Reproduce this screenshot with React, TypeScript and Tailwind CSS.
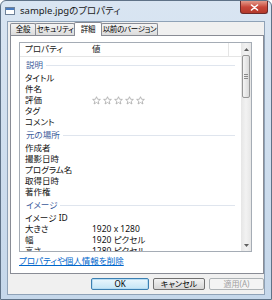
import React from 'react';

const jp = "font-['Noto_Sans','Noto_Sans_CJK_JP',sans-serif] [font-feature-settings:'palt']";

type Row = { name: string; value?: string; stars?: boolean };
type Group = { title: string; rows: Row[] };

const groups: Group[] = [
  {
    title: '説明',
    rows: [{ name: 'タイトル' }, { name: '件名' }, { name: '評価', stars: true }, { name: 'タグ' }, { name: 'コメント' }],
  },
  {
    title: '元の場所',
    rows: [{ name: '作成者' }, { name: '撮影日時' }, { name: 'プログラム名' }, { name: '取得日時' }, { name: '著作権' }],
  },
  {
    title: 'イメージ',
    rows: [
      { name: 'イメージ ID' },
      { name: '大きさ', value: '1920 x 1280' },
      { name: '幅', value: '1920 ピクセル' },
      { name: '高さ', value: '1280 ピクセル' },
    ],
  },
];

const Star = () => (
  <svg width="9" height="9" viewBox="0 0 10 10">
    <path
      d="M5 0.8 L6.2 3.6 L9.3 3.8 L6.9 5.8 L7.7 8.9 L5 7.2 L2.3 8.9 L3.1 5.8 L0.7 3.8 L3.8 3.6 Z"
      fill="#ffffff"
      stroke="#a9a9a9"
      strokeWidth="0.9"
      strokeLinejoin="round"
    />
  </svg>
);

const Tab = ({ label, width, active }: { label: string; width: string; active?: boolean }) =>
  active ? (
    <div
      className={`${width} h-[14px] -mb-px -ml-px relative z-10 flex items-center justify-center whitespace-nowrap bg-white border border-b-0 border-[#898c95] rounded-t-[2px] text-[7.5px] tracking-[-0.3px] text-black`}
    >
      {label}
    </div>
  ) : (
    <div
      className={`${width} h-[12px] -ml-px flex items-center justify-center whitespace-nowrap overflow-hidden bg-gradient-to-b from-[#f4f4f4] to-[#dcdcdc] border border-b-0 border-[#898c95] rounded-t-[2px] text-[7.5px] tracking-[-0.3px] text-black`}
    >
      {label}
    </div>
  );

const Button = ({ label, width, primary, disabled }: { label: string; width: string; primary?: boolean; disabled?: boolean }) => (
  <div
    className={`${width} h-[12px] flex items-center justify-center whitespace-nowrap rounded-[2px] border text-[8px] ${
      primary
        ? 'border-[#3c7fb1] bg-gradient-to-b from-[#eaf6fd] to-[#c4e5f6] shadow-[inset_0_0_0_1px_#b6dcf3]'
        : disabled
        ? 'border-[#adb2b5] bg-[#f4f4f4] text-[#a0a0a0]'
        : 'border-[#707070] bg-gradient-to-b from-[#f2f2f2] to-[#d6d6d6]'
    }`}
  >
    {label}
  </div>
);

export default function App() {
  return (
    <div className={`w-[272px] h-[300px] overflow-hidden bg-white ${jp}`}>
      <div className="w-[272px] h-[300px] flex flex-col rounded-t-[6px] border border-[#5f7287] bg-gradient-to-b from-[#d9e5f2] to-[#c5d7ea]">
        {/* title bar */}
        <div className="h-[20px] flex items-center pl-[4px] pr-[3px] shrink-0">
          <div className="w-[10px] h-[8px] mr-[5px] border border-[#6f8299] bg-white flex flex-col">
            <div className="h-[2px] bg-[#4a7cc0]" />
          </div>
          <span className="text-[9.5px] text-[#1a1a1a] leading-none">sample.jpgのプロパティ</span>
          <div className="ml-auto self-start w-[28px] h-[13px] rounded-b-[3px] border border-t-0 border-[#6d2a2a] bg-gradient-to-b from-[#e29a8c] via-[#c9473a] to-[#b33a2c] flex items-center justify-center">
            <svg width="9" height="7" viewBox="0 0 9 7">
              <path d="M1.5 1 L7.5 6 M7.5 1 L1.5 6" stroke="#ffffff" strokeWidth="1.6" strokeLinecap="round" />
            </svg>
          </div>
        </div>

        {/* client area */}
        <div className="flex-1 mx-[6px] mb-[4px] bg-[#f0f0f0] border border-[#8fa2b7] flex flex-col">
          {/* tabs */}
          <div className="h-[13px] flex items-end pl-[3px] shrink-0">
            <Tab label="全般" width="w-[26px]" />
            <Tab label="セキュリティ" width="w-[40px]" />
            <Tab label="詳細" width="w-[28px]" active />
            <Tab label="以前のバージョン" width="w-[57px]" />
          </div>

          {/* panel */}
          <div className="h-[239px] ml-[2px] bg-white border border-[#898c95] flex flex-col">
            {/* list box */}
            <div className="mt-[6px] ml-[8px] w-[233px] h-[210px] border border-[#a5acb5] flex overflow-hidden">
              <div className="flex-1 flex flex-col overflow-hidden">
                <div className="h-[14px] shrink-0 flex items-center border-b border-[#e5e5e5] text-[8.5px] text-[#222] relative">
                  <div className="w-[72px] pl-[5px]">プロパティ</div>
                  <div>値</div>
                  <div className="absolute left-[208px] top-0 h-[14px] w-px bg-[#e5e5e5]" />
                </div>
                <div className="mt-[1px] flex flex-col">
                  {groups.map(g => (
                    <div key={g.title} className="flex flex-col">
                      <div className="h-[15px] flex items-center pl-[6px] pr-[6px] gap-[3px]">
                        <span className="text-[8.5px] text-[#3b5a9a] leading-none">{g.title}</span>
                        <div className="flex-1 h-px bg-[#dfe5ee]" />
                      </div>
                      {g.rows.map(r => (
                        <div key={r.name} className="h-[11px] flex items-center text-[8.5px] text-[#111] leading-none">
                          <div className="w-[72px] pl-[5px]">{r.name}</div>
                          {r.stars ? (
                            <div className="flex gap-[2px]">
                              <Star />
                              <Star />
                              <Star />
                              <Star />
                              <Star />
                            </div>
                          ) : (
                            <div>{r.value}</div>
                          )}
                        </div>
                      ))}
                    </div>
                  ))}
                </div>
              </div>

              {/* scrollbar */}
              <div className="w-[10px] shrink-0 flex flex-col bg-gradient-to-r from-[#e6e6e6] via-[#f2f2f2] to-[#e6e6e6]">
                <div className="h-[12px] flex items-center justify-center">
                  <svg width="5" height="3" viewBox="0 0 5 3">
                    <path d="M2.5 0 L5 3 L0 3 Z" fill="#606060" />
                  </svg>
                </div>
                <div className="h-[43px] mx-[1px] rounded-[2px] border border-[#979797] bg-gradient-to-r from-[#f5f5f5] to-[#dadada] flex flex-col items-center justify-center gap-[1px]">
                  <div className="w-[4px] h-px bg-[#8a8a8a]" />
                  <div className="w-[4px] h-px bg-[#8a8a8a]" />
                  <div className="w-[4px] h-px bg-[#8a8a8a]" />
                </div>
                <div className="flex-1" />
                <div className="h-[12px] flex items-center justify-center">
                  <svg width="5" height="3" viewBox="0 0 5 3">
                    <path d="M0 0 L5 0 L2.5 3 Z" fill="#606060" />
                  </svg>
                </div>
              </div>
            </div>

            {/* link */}
            <div className="mt-[3px] ml-[8px] h-[12px] flex items-center">
              <span className="text-[8.5px] text-[#0066cc] underline leading-none">プロパティや個人情報を削除</span>
            </div>
          </div>

          {/* buttons */}
          <div className="mt-[4px] flex justify-end gap-[4px]">
            <Button label="OK" width="w-[58px]" primary />
            <Button label="キャンセル" width="w-[52px]" />
            <Button label="適用(A)" width="w-[55px]" disabled />
          </div>
        </div>
      </div>
    </div>
  );
}
